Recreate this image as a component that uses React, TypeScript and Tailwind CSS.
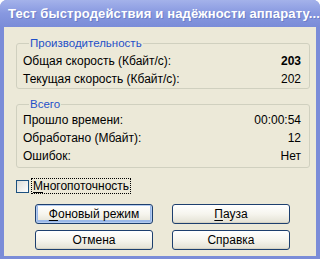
import React from "react";

const font = { fontFamily: '"Liberation Sans", Arial, sans-serif' };

const Row: React.FC<{ label: string; value: string; bold?: boolean }> = (props) => (
  <div className="flex h-[18px] items-center justify-between">
    <span>{props.label}</span>
    <span className={props.bold ? "font-bold" : ""}>{props.value}</span>
  </div>
);

const Group: React.FC<React.PropsWithChildren<{ title: string; className?: string }>> = (props) => (
  <fieldset
    className={
      "rounded-[3px] border border-[#d0d0bf] pr-[8px] pl-[6px] " + (props.className ?? "")
    }
  >
    <legend className="ml-[6px] px-[1px] text-[11.5px] leading-[13px] text-[#1f50c8]">
      {props.title}
    </legend>
    {props.children}
  </fieldset>
);

const XpButton: React.FC<{ label: string; mnemonic?: number; isDefault?: boolean }> = (props) => {
  const i = props.mnemonic;
  return (
    <button
      className={
        "h-[20px] w-[118px] rounded-[3px] border border-[#1d3f6e] bg-gradient-to-b from-white via-[#f6f5ee] to-[#e3e1d4] text-center leading-[16px] text-black " +
        (props.isDefault
          ? "shadow-[inset_0_0_0_1px_#b4ccf0,inset_0_-1px_0_2px_#9ab8e8]"
          : "shadow-[inset_0_-1px_0_0_#d6d3c4]")
      }
    >
      {i === undefined ? (
        props.label
      ) : (
        <>
          {props.label.slice(0, i)}
          <span className="underline underline-offset-[2px]">{props.label[i]}</span>
          {props.label.slice(i + 1)}
        </>
      )}
    </button>
  );
};

export default function App() {
  return (
    <div className="h-[260px] w-[322px] bg-white text-[12px] text-black" style={font}>
      <div className="flex h-[259px] w-[320px] flex-col overflow-hidden rounded-t-[7px] bg-[#7a8cd8]">
        <div className="flex h-[27px] shrink-0 items-center bg-gradient-to-b from-[#a4b2ea] via-[#8798e0] to-[#7a8cd8] pl-[8px]">
          <span className="whitespace-nowrap text-[13px] font-bold tracking-[0.15px] text-white [text-shadow:1px_1px_0_#6d7fc8]">
            Тест быстродействия и надёжности аппарату...
          </span>
        </div>
        <div className="mx-[4px] mb-[3px] flex flex-1 flex-col bg-[#ece9d8] pt-[10px] pr-[6px] pl-[12px]">
          <Group title="Производительность">
            <div className="flex flex-col pt-[2px]">
              <Row label="Общая скорость (Кбайт/с):" value="203" bold />
              <Row label="Текущая скорость (Кбайт/с):" value="202" />
            </div>
          </Group>
          <Group title="Всего" className="mt-[9px] pb-[2px]">
            <div className="flex flex-col">
              <Row label="Прошло времени:" value="00:00:54" />
              <Row label="Обработано (Мбайт):" value="12" />
              <Row label="Ошибок:" value="Нет" />
            </div>
          </Group>
          <label className="mt-[10px] flex items-center">
            <span className="h-[13px] w-[13px] border border-[#1c5180] bg-gradient-to-br from-[#dcdcd7] to-white" />
            <span className="ml-[2px] border border-dotted border-black px-[1px] leading-[14px]">
              <span className="underline underline-offset-[2px]">М</span>ногопоточность
            </span>
          </label>
          <div className="mt-[10px] grid grid-cols-[118px_118px] gap-x-[19px] gap-y-[6px] pl-[19px]">
            <XpButton label="Фоновый режим" mnemonic={0} isDefault />
            <XpButton label="Пауза" mnemonic={0} />
            <XpButton label="Отмена" />
            <XpButton label="Справка" />
          </div>
        </div>
      </div>
    </div>
  );
}
